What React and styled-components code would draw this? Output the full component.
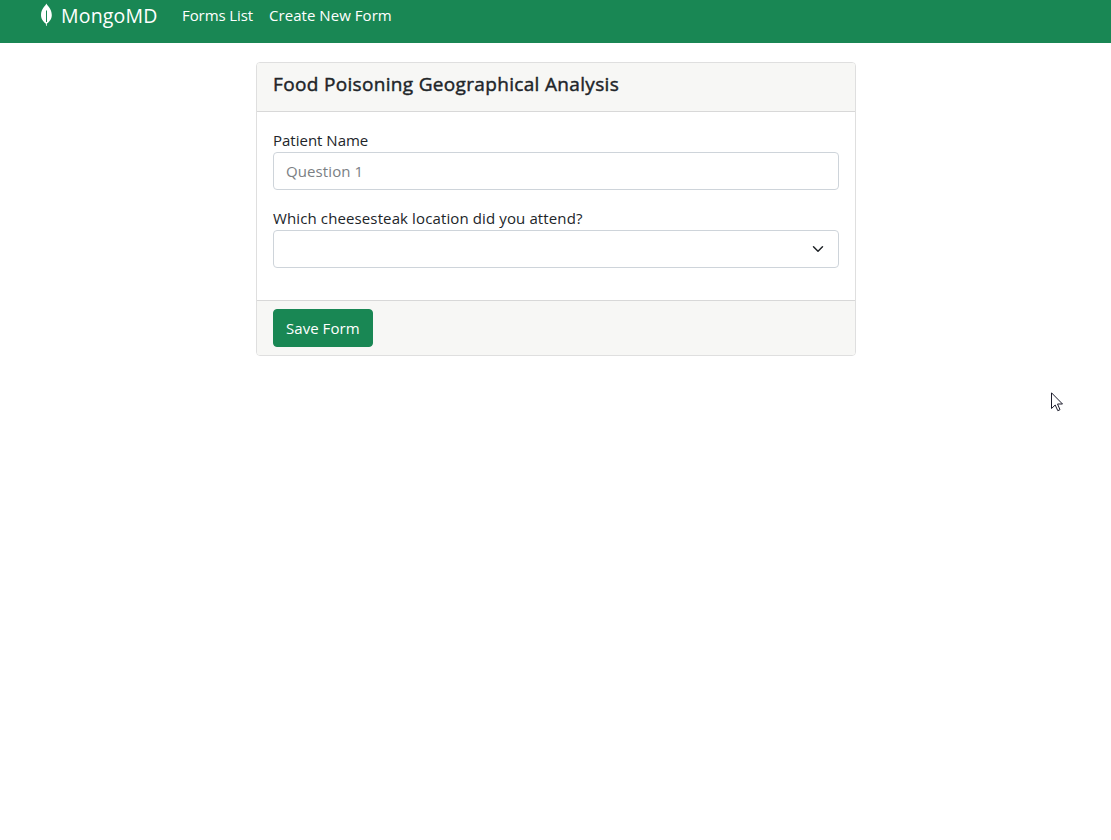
import React from "react";
import styled, { createGlobalStyle } from "styled-components";

const GlobalStyle = createGlobalStyle`
  *, *::before, *::after { box-sizing: border-box; }
  body {
    margin: 0;
    background: #fff;
    color: #212529;
    font-family: "Segoe UI", "Open Sans", "Noto Sans", sans-serif;
    font-size: 15px;
    line-height: 24px;
  }
`;

const Navbar = styled.nav`
  display: flex;
  align-items: flex-start;
  height: 43px;
  padding-left: 40px;
  background: #198754;
  color: #fff;
`;

const Brand = styled.a`
  display: flex;
  width: 134px;
  padding-top: 1px;
  font-size: 19.5px;
  line-height: 30px;
  letter-spacing: 0.18px;
  white-space: nowrap;
`;

const Leaf = styled.svg`
  width: 13px;
  height: 24px;
  margin: 1px 8px 0 0;
  flex: none;
`;

const NavLink = styled.a`
  padding: 3px 8px 0;
  width: ${(p) => p.$width}px;
  letter-spacing: ${(p) => p.$spacing}px;
  white-space: nowrap;
`;

const Card = styled.form`
  width: 600px;
  margin: 19px 0 0 256px;
  border: 1px solid #dfdfdf;
  border-radius: 4px;
  overflow: hidden;
`;

const CardHeader = styled.header`
  height: 49px;
  padding: 9px 16px 0;
  background: #f7f7f5;
  border-bottom: 1px solid #d8d8d8;
`;

const Title = styled.h5`
  margin: 0;
  font-size: 19px;
  font-weight: 400;
  line-height: 24px;
  letter-spacing: 0.33px;
  -webkit-text-stroke: 0.45px currentColor;
  white-space: nowrap;
`;

const CardBody = styled.div`
  padding: 16px;
`;

const Field = styled.div`
  margin-bottom: 16px;
`;

const Label = styled.label`
  display: block;
  height: 24px;
  letter-spacing: ${(p) => p.$spacing}px;
`;

const Input = styled.input`
  display: block;
  width: 100%;
  height: 38px;
  padding: 6px 12px;
  border: 1px solid #ced4da;
  border-radius: 4px;
  color: #212529;
  font: inherit;
  letter-spacing: 0.1px;
  &::placeholder {
    color: #7b8084;
    opacity: 1;
  }
`;

const Select = styled.div`
  display: flex;
  align-items: center;
  justify-content: flex-end;
  height: 38px;
  padding-right: 12px;
  border: 1px solid #ced4da;
  border-radius: 4px;
`;

const CardFooter = styled.footer`
  padding: 8px 16px;
  background: #f7f7f5;
  border-top: 1px solid #d8d8d8;
`;

const SaveButton = styled.button`
  display: block;
  width: 100px;
  height: 38px;
  padding: 0 0 0 12px;
  border: 1px solid #198754;
  border-radius: 4px;
  background: #198754;
  color: #fff;
  font: inherit;
  letter-spacing: 0.05px;
  text-align: left;
  white-space: nowrap;
`;

const Cursor = styled.svg`
  position: absolute;
  left: 1051px;
  top: 392px;
  width: 12px;
  height: 20px;
`;

export default function App() {
  return (
    <>
      <GlobalStyle />
      <Navbar>
        <Brand>
          <Leaf viewBox="0 0 13 24">
            <path
              d="M6.4 1.5C6.9 3.2 11.8 6.8 11.8 13c0 4.2-2.7 7-4.9 8.6L6.6 24h-.5l-.3-2.4C3.7 20 1 17.2 1 13 1 6.8 6 3.2 6.4 1.5z"
              fill="#fff"
            />
            <path d="M6.500 8.500v11.500" stroke="#198754" strokeWidth="1" />
          </Leaf>
          MongoMD
        </Brand>
        <NavLink $width={87} $spacing={-0.08}>Forms List</NavLink>
        <NavLink $width={139} $spacing={0.05}>Create New Form</NavLink>
      </Navbar>
      <Card>
        <CardHeader>
          <Title>Food Poisoning Geographical Analysis</Title>
        </CardHeader>
        <CardBody>
          <Field>
            <Label $spacing={0}>Patient Name</Label>
            <Input placeholder="Question 1" />
          </Field>
          <Field>
            <Label $spacing={0.12}>Which cheesesteak location did you attend?</Label>
            <Select>
              <svg width="16" height="12" viewBox="0 0 16 16">
                <path
                  d="M2 5l6 6 6-6"
                  fill="none"
                  stroke="#212529"
                  strokeWidth="2"
                  strokeLinecap="round"
                  strokeLinejoin="round"
                />
              </svg>
            </Select>
          </Field>
        </CardBody>
        <CardFooter>
          <SaveButton type="button">Save Form</SaveButton>
        </CardFooter>
      </Card>
      <Cursor viewBox="0 0 12 20">
        <path
          d="M.5.8v15.7L4.200 13l2.600 5.700 2.200-1L6.500 12h5z"
          fill="#fff"
          stroke="#1c1c2c"
          strokeWidth="1"
        />
      </Cursor>
    </>
  );
}
